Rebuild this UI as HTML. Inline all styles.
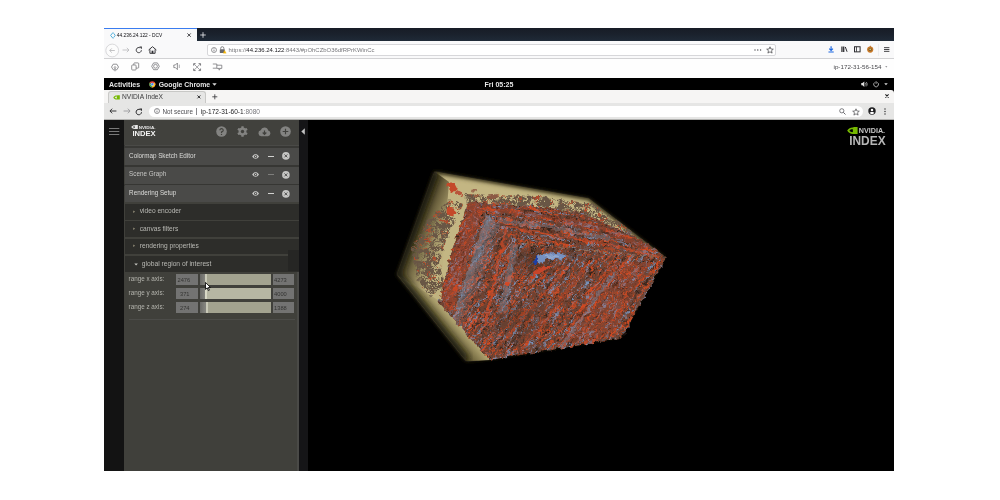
<!DOCTYPE html>
<html>
<head>
<meta charset="utf-8">
<style>
html,body{margin:0;padding:0;background:#fff;}
body{width:1000px;height:500px;position:relative;overflow:hidden;font-family:"Liberation Sans",sans-serif;}
.a{position:absolute;}
.t{position:absolute;white-space:nowrap;line-height:10px;height:10px;}
svg{position:absolute;overflow:visible;}
#win{left:104px;top:28px;width:789.8px;height:443.3px;background:#000;overflow:hidden;will-change:transform;}
/* Firefox tab bar */
#fftabs{left:0;top:0;width:790px;height:13px;background:linear-gradient(#171c26,#1a212c 45%,#1f2a37);}
#fftab{left:0;top:0;width:93px;height:13px;background:#f9f9fa;border-top:1px solid #3a7cf0;box-sizing:border-box;}
/* firefox nav */
#ffnav{left:0;top:13px;width:790px;height:17.6px;background:#f9f9fa;border-bottom:1px solid #d2d2d4;box-sizing:border-box;}
#ffurl{left:103px;top:2px;width:569px;height:12px;background:#fff;border:1px solid #d7d7da;border-radius:2px;box-sizing:border-box;}
/* dcv toolbar */
#dcv{left:0;top:30.6px;width:790px;height:19.4px;background:#fefefe;}
/* gnome bar */
#gnome{left:0;top:50px;width:790px;height:12px;background:#000;color:#e6e6e6;font-weight:bold;font-size:7px;}
/* chrome tabs */
#chtabs{left:0;top:62px;width:790px;height:13px;background:#f6f5f4;border-radius:0 3px 0 0;}
#chtab{left:3.6px;top:0.5px;width:98.2px;height:12.5px;background:#e6e6e5;border-radius:3px 3px 0 0;border:1px solid #c8c8c6;border-bottom:none;box-sizing:border-box;}
#chnav{left:0;top:75px;width:790px;height:17px;background:#e6e6e5;border-bottom:1px solid #b4b4b2;box-sizing:border-box;}
#churl{left:45px;top:2px;width:714px;height:11.4px;background:#fff;border-radius:6px;}
/* app */
#app{left:0;top:92px;width:790px;height:351px;background:#000;}
#strip{left:0;top:0;width:20px;height:351px;background:#131313;}
#panel{left:20px;top:0;width:175px;height:351px;background:#40403b;overflow:hidden;}
#split{left:195px;top:0;width:9.2px;height:351px;background:#151517;}
</style>
</head>
<body>
<div id="win" class="a">
  <!-- Firefox tab bar -->
  <div id="fftabs" class="a">
    <div id="fftab" class="a"></div>
    <svg style="left:6px;top:4px" width="6" height="7" viewBox="0 0 6 7"><path d="M3.2 0.3 L0.6 3.4 L3.2 6.6 M3.6 1.2 L5.2 3.4 L3.6 5.6" fill="none" stroke="#3fa7d8" stroke-width="0.9"/></svg>
    <div class="t" style="left:12.8px;top:2.7px;font-size:4.85px;color:#0c0c10;">44.236.24.122 - DCV</div>
    <svg style="left:82.6px;top:5px" width="4.2" height="4.2" viewBox="0 0 5 5"><path d="M0.5 0.5L4.5 4.5M4.5 0.5L0.5 4.5" stroke="#2a2a2e" stroke-width="1"/></svg>
    <svg style="left:96px;top:3.6px" width="6" height="6" viewBox="0 0 6 6"><path d="M3 0.2V5.8M0.2 3H5.8" stroke="#f0f0f2" stroke-width="0.8"/></svg>
  </div>
  <!-- Firefox nav bar -->
  <div id="ffnav" class="a"><div class="a" style="left:0;top:0.7px;width:790px;height:16px;">
    <svg style="left:1px;top:1px" width="15" height="15" viewBox="0 0 15 15"><circle cx="7.2" cy="7.5" r="6.4" fill="#fcfcfc" stroke="#c9c9cb" stroke-width="0.7"/><path d="M9.8 7.5H4.8M6.8 5.4L4.7 7.5L6.8 9.6" fill="none" stroke="#b4b4b6" stroke-width="0.8"/></svg>
    <svg style="left:18px;top:5px" width="8" height="6" viewBox="0 0 8 6"><path d="M0.5 3H7M4.8 0.8L7 3L4.8 5.2" fill="none" stroke="#b8b8ba" stroke-width="0.8"/></svg>
    <svg style="left:31px;top:4px" width="8" height="8" viewBox="0 0 8 8"><path d="M6.4 4.2A2.6 2.6 0 1 1 5.2 1.9" fill="none" stroke="#3a3a3e" stroke-width="0.95"/><path d="M4.3 0.6H6.9V3.2Z" fill="#3a3a3e"/></svg>
    <svg style="left:44px;top:4px" width="9" height="8" viewBox="0 0 9 8"><path d="M0.6 4L4.5 0.7L8.4 4M1.9 3.4V7.3H7.1V3.4" fill="none" stroke="#2e2e32" stroke-width="0.95"/><rect x="3.6" y="4.7" width="1.8" height="2.6" fill="#2e2e32"/></svg>
    <div id="ffurl" class="a"></div>
    <svg style="left:107px;top:5px" width="6" height="6" viewBox="0 0 6 6"><circle cx="3" cy="3" r="2.5" fill="none" stroke="#55555a" stroke-width="0.6"/><path d="M3 2.6V4.4M3 1.4V2" stroke="#55555a" stroke-width="0.7"/></svg>
    <svg style="left:115px;top:4px" width="7" height="8" viewBox="0 0 7 8"><path d="M1.7 3.4V2.3A1.6 1.6 0 0 1 4.9 2.3V3.4" fill="none" stroke="#68686c" stroke-width="0.8"/><rect x="0.8" y="3.3" width="5" height="3.8" rx="0.5" fill="#68686c"/><path d="M4.2 7.2L5.7 4.4L7.2 7.2Z" fill="#f5b400" stroke="#f5b400" stroke-width="0.3"/></svg>
    <div class="t" style="left:124.5px;top:3.5px;font-size:5.94px;color:#77777b;">https://<span style="color:#18171c">44.236.24.122</span>:8443/#pOhCZbO36dfRPrKWinCc</div>
    <!-- url right -->
    <svg style="left:650px;top:7px" width="8" height="2" viewBox="0 0 8 2"><circle cx="1" cy="1" r="0.7" fill="#4a4a4f"/><circle cx="3.8" cy="1" r="0.7" fill="#4a4a4f"/><circle cx="6.6" cy="1" r="0.7" fill="#4a4a4f"/></svg>
    <svg style="left:662px;top:4px" width="8" height="8" viewBox="0 0 8 8"><path d="M4 0.8L4.9 3L7.3 3.2L5.5 4.7L6.1 7.1L4 5.8L1.9 7.1L2.5 4.7L0.7 3.2L3.1 3Z" fill="none" stroke="#3e3e42" stroke-width="0.7" stroke-linejoin="round"/></svg>
    <!-- right toolbar icons -->
    <svg style="left:723.8px;top:4.3px" width="6.2" height="7" viewBox="0 0 8 9"><path d="M4 0.3V5.6M1.6 3.4L4 5.8L6.4 3.4M0.6 7.7H7.4" fill="none" stroke="#1a66e0" stroke-width="1.45"/></svg>
    <svg style="left:736.8px;top:4.7px" width="7.2" height="6.4" viewBox="0 0 9 8"><path d="M1.2 0.6V7.4M3.4 0.6V7.4" stroke="#2c2c30" stroke-width="1.6"/><path d="M5.4 1.2L7.6 7.2" stroke="#2c2c30" stroke-width="1.25"/></svg>
    <svg style="left:749.8px;top:4.6px" width="6.6" height="6.6" viewBox="0 0 8 8"><rect x="0.6" y="0.9" width="6.8" height="6.2" fill="none" stroke="#2c2c30" stroke-width="1.2"/><path d="M3 1V7" stroke="#2c2c30" stroke-width="1"/></svg>
    <svg style="left:762px;top:3.8px" width="8.4" height="8.4" viewBox="0 0 10 10"><circle cx="5" cy="5.4" r="3.7" fill="#c97a28"/><circle cx="5" cy="5.4" r="2" fill="#7a5a2a"/><circle cx="5" cy="5.2" r="1" fill="#e8c26a"/><path d="M4 2L5.2 0.5L6.2 2Z" fill="#b5601c"/></svg>
    <div class="a" style="left:773.5px;top:2px;width:1px;height:12px;background:#ececee"></div>
    <svg style="left:779.8px;top:5.4px" width="5.4" height="5" viewBox="0 0 7 6"><path d="M0 0.6H7M0 3H7M0 5.4H7" stroke="#2a2a2e" stroke-width="1.15"/></svg>
  </div></div>
  <!-- DCV toolbar -->
  <div id="dcv" class="a"><div class="a" style="left:0;top:-0.6px;width:790px;height:20px;">
    <svg style="left:7px;top:4.5px" width="8" height="9" viewBox="0 0 8 9"><path d="M2.2 1.2H5.8L7.5 4L5.8 6.8H2.2L0.5 4Z" fill="none" stroke="#707074" stroke-width="0.75" stroke-linejoin="round"/><path d="M4 3V5.5M2.9 4.5L4 5.7L5.1 4.5" fill="none" stroke="#707074" stroke-width="0.7"/><path d="M4 6.8V8.3" stroke="#707074" stroke-width="0.7"/></svg>
    <svg style="left:27px;top:4.4px" width="9" height="9" viewBox="0 0 9 9"><rect x="2.8" y="0.9" width="4.9" height="5.2" rx="0.8" fill="none" stroke="#707074" stroke-width="0.75"/><rect x="0.7" y="3" width="4.4" height="5" rx="0.8" fill="#fdfdfd" stroke="#707074" stroke-width="0.75"/></svg>
    <svg style="left:47.4px;top:4.4px" width="9" height="9" viewBox="0 0 9 9"><path d="M2.6 0.9H6.4L8.3 4.3L6.4 7.7H2.6L0.7 4.3Z" fill="none" stroke="#707074" stroke-width="0.75" stroke-linejoin="round"/><circle cx="4.5" cy="4.3" r="1.9" fill="none" stroke="#707074" stroke-width="0.7"/></svg>
    <svg style="left:68.6px;top:4.4px" width="9" height="9" viewBox="0 0 9 9"><path d="M0.8 3H2.4L4.4 1V7.6L2.4 5.6H0.8Z" fill="none" stroke="#707074" stroke-width="0.75" stroke-linejoin="round"/><path d="M6.3 2.6V6" stroke="#8a8a8e" stroke-width="0.7"/></svg>
    <svg style="left:89px;top:4.6px" width="8.2" height="8.2" viewBox="0 0 9 9"><path d="M1.2 1.2L7.8 7.8M7.8 1.2L1.2 7.8" stroke="#707074" stroke-width="0.7"/><path d="M0.7 2.9V0.7H2.9M6.1 0.7H8.3V2.9M8.3 6.1V8.3H6.1M2.9 8.3H0.7V6.1" fill="none" stroke="#505054" stroke-width="0.8"/></svg>
    <svg style="left:108px;top:4.6px" width="11" height="9" viewBox="0 0 11 9"><path d="M0.8 1H4.8V5.2H0.8M4.8 2.2H9.8V5.4H4.8" fill="none" stroke="#707074" stroke-width="0.75"/><path d="M6.5 5.6L7.3 7.2L8.1 5.6" fill="none" stroke="#707074" stroke-width="0.7"/></svg>
    <div class="t" style="left:729.5px;top:3.6px;font-size:6.26px;color:#4a4a4e;">ip-172-31-56-154</div>
    <svg style="left:781px;top:8.4px" width="2.6" height="2" viewBox="0 0 4 3"><path d="M0.3 0.4L2 2.4L3.7 0.4Z" fill="#77777b"/></svg>
  </div></div>
  <!-- GNOME bar -->
  <div id="gnome" class="a">
    <div class="t" style="left:5px;top:1.5px;">Activities</div>
    <svg style="left:45.2px;top:2.9px" width="6.6" height="6.6" viewBox="0 0 7 7"><circle cx="3.5" cy="3.5" r="3.3" fill="#e2453a"/><path d="M3.5 3.5L0.6 1.9A3.3 3.3 0 0 0 3.2 6.8Z" fill="#3aa757"/><path d="M3.5 3.5L3.2 6.8A3.3 3.3 0 0 0 6.4 1.9Z" fill="#f6c026"/><circle cx="3.5" cy="3.5" r="1.6" fill="#fff"/><circle cx="3.5" cy="3.5" r="1.25" fill="#4a8af4"/></svg>
    <div class="t" style="left:54.8px;top:1.5px;font-size:6.85px;">Google Chrome</div>
    <svg style="left:108px;top:5px" width="5" height="3" viewBox="0 0 5 3"><path d="M0.3 0.3L2.5 2.7L4.7 0.3Z" fill="#d8d8d8"/></svg>
    <div class="t" style="left:380.5px;top:1.5px;">Fri 05:25</div>
    <svg style="left:757.2px;top:3.2px" width="7.2" height="6.4" viewBox="0 0 8 7"><path d="M0.3 2.3H1.6L3.7 0.4V6.6L1.6 4.7H0.3Z" fill="#e0e0e0"/><path d="M4.8 2A2 2 0 0 1 4.8 5M5.7 1A3.3 3.3 0 0 1 5.7 6" fill="none" stroke="#e0e0e0" stroke-width="0.7"/></svg>
    <svg style="left:769px;top:3.2px" width="6.2" height="6.2" viewBox="0 0 7 7"><path d="M2.2 1.5A2.7 2.7 0 1 0 4.8 1.5" fill="none" stroke="#e0e0e0" stroke-width="0.8"/><path d="M3.5 0.2V3.2" stroke="#e0e0e0" stroke-width="0.8"/></svg>
    <svg style="left:780px;top:5.2px" width="4" height="2.5" viewBox="0 0 5 3"><path d="M0.3 0.3L2.5 2.7L4.7 0.3Z" fill="#d8d8d8"/></svg>
  </div>
  <!-- Chrome tabs -->
  <div id="chtabs" class="a">
    <div id="chtab" class="a"></div>
    <svg style="left:8.5px;top:5px" width="7" height="5" viewBox="0 0 7 5"><path d="M0.3 2.4C1.5 0.6 3.2 0.3 4.2 0.7V0.2H6.8V4.6H3.6C2.2 4.6 1 3.7 0.3 2.4Z" fill="#76b900"/><path d="M1.7 2.4C2.3 1.6 3.2 1.4 3.9 1.6V3.4C3 3.5 2.2 3.1 1.7 2.4Z" fill="#e6e6e5"/></svg>
    <div class="t" style="left:18px;top:2.2px;font-size:6.65px;color:#3a3a3c;">NVIDIA IndeX</div>
    <svg style="left:93.4px;top:5px" width="3.8" height="3.8" viewBox="0 0 5 5"><path d="M0.6 0.6L4.4 4.4M4.4 0.6L0.6 4.4" stroke="#2e2e30" stroke-width="1.3"/></svg>
    <svg style="left:108.4px;top:3.8px" width="5.6" height="5.6" viewBox="0 0 6 6"><path d="M3 0.3V5.7M0.3 3H5.7" stroke="#3a3a3c" stroke-width="0.9"/></svg>
    <svg style="left:781px;top:4.4px" width="4" height="4" viewBox="0 0 4 4"><path d="M0.4 0.4L3.6 3.6M3.6 0.4L0.4 3.6" stroke="#1c1c1e" stroke-width="1.05"/></svg>
  </div>
  <!-- Chrome nav -->
  <div id="chnav" class="a"><div class="a" style="left:0;top:0.8px;width:790px;height:16px;">
    <svg style="left:4.8px;top:4.5px" width="8" height="6" viewBox="0 0 8 6"><path d="M7.4 3H1M3.2 0.7L0.9 3L3.2 5.3" fill="none" stroke="#2e2e30" stroke-width="0.95"/></svg>
    <svg style="left:18.5px;top:4.5px" width="8" height="6" viewBox="0 0 8 6"><path d="M0.6 3H7M4.8 0.7L7.1 3L4.8 5.3" fill="none" stroke="#9a9a9c" stroke-width="0.9"/></svg>
    <svg style="left:31px;top:4px" width="8" height="8" viewBox="0 0 8 8"><path d="M6.5 4.2A2.7 2.7 0 1 1 5.3 1.8" fill="none" stroke="#2e2e30" stroke-width="1"/><path d="M4.2 0.4H7V3.2Z" fill="#2e2e30"/></svg>
    <div id="churl" class="a"></div>
    <svg style="left:49.5px;top:4.5px" width="6" height="6" viewBox="0 0 6 6"><circle cx="3" cy="3" r="2.5" fill="none" stroke="#55555a" stroke-width="0.65"/><path d="M3 2.6V4.4M3 1.4V2" stroke="#55555a" stroke-width="0.7"/></svg>
    <div class="t" style="left:58.5px;top:3.1px;font-size:6.3px;color:#4c4c50;">Not secure</div>
    <div class="a" style="left:92px;top:4px;width:0.7px;height:7px;background:#88888c"></div>
    <div class="t" style="left:96.8px;top:3.1px;font-size:6.54px;color:#1c1c1e;">ip-172-31-60-1<span style="color:#77777b">:8080</span></div>
    <svg style="left:734.5px;top:4.5px" width="7" height="7" viewBox="0 0 7 7"><circle cx="2.8" cy="2.8" r="2.1" fill="none" stroke="#55555a" stroke-width="0.75"/><path d="M4.4 4.4L6.5 6.5" stroke="#55555a" stroke-width="0.9"/></svg>
    <svg style="left:747.5px;top:4px" width="8" height="8" viewBox="0 0 8 8"><path d="M4 0.8L4.9 3L7.3 3.2L5.5 4.7L6.1 7.1L4 5.8L1.9 7.1L2.5 4.7L0.7 3.2L3.1 3Z" fill="none" stroke="#4a4a4e" stroke-width="0.7" stroke-linejoin="round"/></svg>
    <svg style="left:764px;top:3.5px" width="8" height="8" viewBox="0 0 8 8"><circle cx="4" cy="4" r="3.7" fill="#1e1e20"/><circle cx="4" cy="3" r="1.25" fill="#fff"/><path d="M1.6 6.1C2.3 4.7 5.7 4.7 6.4 6.1A3.2 3.2 0 0 1 1.6 6.1Z" fill="#fff"/></svg>
    <svg style="left:780.2px;top:4.5px" width="2" height="7" viewBox="0 0 2 7"><circle cx="1" cy="0.9" r="0.75" fill="#3a3a3c"/><circle cx="1" cy="3.5" r="0.75" fill="#3a3a3c"/><circle cx="1" cy="6.1" r="0.75" fill="#3a3a3c"/></svg>
  </div></div>
  <div class="a" style="left:0;top:442.6px;width:790px;height:0.8px;background:#1b2230;z-index:5"></div>
  <!-- App -->
  <div id="app" class="a">
    <div id="strip" class="a">
      <svg style="left:5px;top:8px" width="11" height="7" viewBox="0 0 11 7"><path d="M0 0.5H10.3M0 3.5H10.3M0 6.5H10.3" stroke="#949494" stroke-width="0.8"/></svg>
    </div>
    <div id="panel" class="a">
      <style>
        #panel .hdr{left:0;top:0;width:175px;height:25px;background:#41413d;}
        #panel .row{left:0.8px;width:174.2px;height:17px;background:#4a4a48;color:#dcdcda;font-size:6.3px;}
        #panel .row .t{left:4.3px;top:3.2px;}
        #panel .sub{left:1px;width:174px;height:15.5px;background:#2d2d2a;color:#b9b9b4;font-size:6.6px;}
        #panel .sub .t{left:14.8px;top:1.9px;}
        #panel .lbl{left:4.6px;font-size:6.3px;color:#b4b4ae;}
        #panel .box{width:22px;height:11px;background:#737372;color:#343432;font-size:5.7px;}
        #panel .box .t{left:1.5px;top:0.8px;}
        #panel .trk{left:76px;width:71px;height:11px;background:linear-gradient(90deg,#6a6a67,#83837e 5px,#83837e);}
      </style>
      <div class="a hdr"></div>
      <!-- small nvidia logo -->
      <svg style="left:6.8px;top:5px" width="25" height="4.2" viewBox="0 0 25 4.2"><path d="M0.2 2.1C1.4 0.5 3 0.1 4.2 0.5V0.1H6.8V4.1H3.6C2.2 4.1 1 3.3 0.2 2.1Z" fill="#e8e8e8"/><path d="M1.6 2.1C2.2 1.4 3.1 1.2 3.8 1.4V2.9C2.9 3 2.1 2.7 1.6 2.1Z" fill="#41413d"/><text x="7.7" y="3.75" font-family="Liberation Sans" font-weight="bold" font-size="4.4" fill="#e8e8e8" textLength="16.8" lengthAdjust="spacingAndGlyphs">NVIDIA.</text></svg>
      <div class="t" style="left:8.6px;top:9.4px;font-size:7.6px;font-weight:bold;color:#f4f4f4;letter-spacing:-0.08px;">INDEX</div>
      <!-- header icons -->
      <svg style="left:92.2px;top:6.2px" width="11" height="11" viewBox="0 0 11 11"><circle cx="5.5" cy="5.5" r="5.3" fill="#838381"/><path d="M3.9 4.3A1.65 1.65 0 1 1 5.5 5.9V6.9" fill="none" stroke="#41413d" stroke-width="1.15"/><circle cx="5.5" cy="8.4" r="0.7" fill="#41413d"/></svg>
      <svg style="left:113px;top:6.2px" width="11" height="11" viewBox="0 0 11 11"><g fill="#838381"><circle cx="5.5" cy="5.5" r="3.9"/><g id="tth"><rect x="4.3" y="0.2" width="2.4" height="10.6" rx="0.4"/></g><use href="#tth" transform="rotate(60 5.5 5.5)"/><use href="#tth" transform="rotate(120 5.5 5.5)"/></g><circle cx="5.5" cy="5.5" r="1.7" fill="#41413d"/></svg>
      <svg style="left:134px;top:7px" width="13" height="9.5" viewBox="0 0 13 9.5"><path d="M3.2 9.2A3 3 0 0 1 2.7 3.3A3.9 3.9 0 0 1 10.2 3.6A2.85 2.85 0 0 1 10 9.2Z" fill="#838381"/><path d="M6.5 3.4V6.8M4.7 5.5L6.5 7.4L8.3 5.5" fill="none" stroke="#41413d" stroke-width="1.2"/></svg>
      <svg style="left:155.8px;top:6.2px" width="11" height="11" viewBox="0 0 11 11"><circle cx="5.5" cy="5.5" r="5.3" fill="#838381"/><path d="M5.5 2.7V8.3M2.7 5.5H8.3" stroke="#41413d" stroke-width="1.15"/></svg>
      <div class="a" style="left:0;top:24.8px;width:175px;height:2.9px;background:#383835;"></div><div class="a" style="left:0.8px;top:25.3px;width:174.2px;height:1px;background:#4a4a47;"></div>
      <!-- rows -->
      <div class="a row" style="top:27.6px;"><div class="t">Colormap Sketch Editor</div></div>
      <div class="a" style="left:0;top:44.6px;width:175px;height:2px;background:#363633;"></div>
      <div class="a row" style="top:46.5px;color:#c6c6c4;"><div class="t" style="top:2.7px">Scene Graph</div></div>
      <div class="a" style="left:0;top:63.5px;width:175px;height:2px;background:#363633;"></div>
      <div class="a row" style="top:65.3px;"><div class="t" style="top:2.4px">Rendering Setup</div></div>
      <svg style="left:127.8px;top:33.6px" width="7.2" height="5" viewBox="0 0 7.2 5"><path d="M0.2 2.5C1.2 0.8 2.4 0.3 3.6 0.3C4.8 0.3 6 0.8 7 2.5C6 4.2 4.8 4.7 3.6 4.7C2.4 4.7 1.2 4.2 0.2 2.5Z" fill="#cbcbc9"/><circle cx="3.6" cy="2.5" r="1.6" fill="#4b4b49"/><circle cx="3.6" cy="2.5" r="0.75" fill="#cbcbc9"/></svg>
      <div class="a" style="left:143.8px;top:35.7px;width:5.8px;height:0.85px;background:#d2d2d0;"></div>
      <svg style="left:158px;top:32.2px" width="7.8" height="7.8" viewBox="0 0 8 8"><circle cx="4" cy="4" r="3.9" fill="#c6c6c4"/><path d="M2.5 2.5L5.5 5.5M5.5 2.5L2.5 5.5" stroke="#4b4b49" stroke-width="0.95"/></svg>
      <svg style="left:127.8px;top:52.0px" width="7.2" height="5" viewBox="0 0 7.2 5"><path d="M0.2 2.5C1.2 0.8 2.4 0.3 3.6 0.3C4.8 0.3 6 0.8 7 2.5C6 4.2 4.8 4.7 3.6 4.7C2.4 4.7 1.2 4.2 0.2 2.5Z" fill="#cbcbc9"/><circle cx="3.6" cy="2.5" r="1.6" fill="#4b4b49"/><circle cx="3.6" cy="2.5" r="0.75" fill="#cbcbc9"/></svg>
      <div class="a" style="left:143.8px;top:54.1px;width:5.8px;height:0.85px;background:#7e7e7c;"></div>
      <svg style="left:158px;top:50.6px" width="7.8" height="7.8" viewBox="0 0 8 8"><circle cx="4" cy="4" r="3.9" fill="#c6c6c4"/><path d="M2.5 2.5L5.5 5.5M5.5 2.5L2.5 5.5" stroke="#4b4b49" stroke-width="0.95"/></svg>
      <svg style="left:127.8px;top:70.9px" width="7.2" height="5" viewBox="0 0 7.2 5"><path d="M0.2 2.5C1.2 0.8 2.4 0.3 3.6 0.3C4.8 0.3 6 0.8 7 2.5C6 4.2 4.8 4.7 3.6 4.7C2.4 4.7 1.2 4.2 0.2 2.5Z" fill="#cbcbc9"/><circle cx="3.6" cy="2.5" r="1.6" fill="#4b4b49"/><circle cx="3.6" cy="2.5" r="0.75" fill="#cbcbc9"/></svg>
      <div class="a" style="left:143.8px;top:73.0px;width:5.8px;height:0.85px;background:#d2d2d0;"></div>
      <svg style="left:158px;top:69.5px" width="7.8" height="7.8" viewBox="0 0 8 8"><circle cx="4" cy="4" r="3.9" fill="#c6c6c4"/><path d="M2.5 2.5L5.5 5.5M5.5 2.5L2.5 5.5" stroke="#4b4b49" stroke-width="0.95"/></svg>
      <!-- sub rows -->
      <div class="a sub" style="top:84.2px;"><svg style="left:8.4px;top:5.4px" width="2.4" height="3.4" viewBox="0 0 3 4"><path d="M0.4 0.4L2.5 2L0.4 3.6Z" fill="#a09a84"/></svg><div class="t">video encoder</div></div>
      <div class="a sub" style="top:101.2px;"><svg style="left:8.4px;top:5.4px" width="2.4" height="3.4" viewBox="0 0 3 4"><path d="M0.4 0.4L2.5 2L0.4 3.6Z" fill="#a09a84"/></svg><div class="t" style="top:2.6px">canvas filters</div></div>
      <div class="a sub" style="top:118.7px;"><svg style="left:8.4px;top:5.4px" width="2.4" height="3.4" viewBox="0 0 3 4"><path d="M0.4 0.4L2.5 2L0.4 3.6Z" fill="#a09a84"/></svg><div class="t">rendering properties</div></div>
      <div class="a sub" style="top:136px;"><svg style="left:8.8px;top:7.1px" width="4.2" height="2.9" viewBox="0 0 4.4 3"><path d="M0.3 0.4L2.2 2.6L4.1 0.4Z" fill="#c4c4be"/></svg><div class="t" style="left:16.8px;top:3.1px;font-size:6.7px;">global region of interest</div></div>
      <!-- scrollbar thumb -->
      <div class="a" style="left:163.6px;top:130px;width:11.4px;height:21.4px;background:#262624;"></div>
      <!-- range rows -->
      <div class="t lbl" style="top:153.8px;">range x axis:</div>
      <div class="a box" style="left:52px;top:154.3px;"><div class="t">2476</div></div>
      <div class="a trk" style="top:154.3px;"><div class="a" style="left:5.6px;top:0;width:65.4px;height:11px;background:#a3a390;"></div><div class="a" style="left:4.8px;top:0;width:1.8px;height:11px;background:#c9c9b8;"></div></div>
      <div class="a box" style="left:148.6px;top:154.3px;width:21.4px"><div class="t">4273</div></div>
      <div class="t lbl" style="top:167.9px;">range y axis:</div>
      <div class="a box" style="left:52px;top:168.4px;"><div class="t" style="left:4px">371</div></div>
      <div class="a trk" style="top:168.4px;"><div class="a" style="left:5.6px;top:0;width:65.4px;height:11px;background:#b6b6a3;"></div><div class="a" style="left:4.8px;top:0;width:1.8px;height:11px;background:#d8d8c6;"></div></div>
      <div class="a box" style="left:148.6px;top:168.4px;width:21.4px"><div class="t">4000</div></div>
      <div class="t lbl" style="top:182.4px;">range z axis:</div>
      <div class="a box" style="left:52px;top:182.2px;"><div class="t" style="left:4px">274</div></div>
      <div class="a trk" style="top:182.2px;"><div class="a" style="left:7px;top:0;width:64px;height:11px;background:#a3a390;"></div><div class="a" style="left:6.2px;top:0;width:1.8px;height:11px;background:#c9c9b8;"></div></div>
      <div class="a box" style="left:148.6px;top:182.2px;width:21.4px"><div class="t">1388</div></div>
      <div class="a" style="left:4.6px;top:198.7px;width:166.5px;height:0.9px;background:#4c4c49;"></div>
      <div class="a" style="left:173.2px;top:151.6px;width:1.8px;height:200px;background:#4a4a47;"></div>
    </div>
    <div id="split" class="a">
      <svg style="left:2.4px;top:8.2px" width="4" height="7" viewBox="0 0 4 7"><path d="M3.8 0.2V6.8L0.3 3.5Z" fill="#c4c4c4"/></svg>
    </div>
    <!-- mouse cursor -->
    <svg style="left:101.4px;top:161.6px" width="6" height="9.6" viewBox="0 0 5 8"><path d="M0.4 0.3V6.2L1.8 4.9L2.8 7.2L3.7 6.8L2.7 4.6H4.6Z" fill="#fff" stroke="#0a0a0a" stroke-width="0.75"/></svg>
    <!-- viewport scene (abs coords via viewBox) -->
    <svg style="left:0;top:0;overflow:hidden" width="790" height="351" viewBox="104 120 790 351">
      <defs>
        <filter id="soft" x="-10%" y="-10%" width="120%" height="120%"><feGaussianBlur stdDeviation="2.2"/></filter>
        <filter id="soft1" x="-10%" y="-10%" width="120%" height="120%"><feGaussianBlur stdDeviation="1"/></filter>
        <filter id="soft2" x="-10%" y="-10%" width="120%" height="120%"><feGaussianBlur stdDeviation="3.5"/></filter>
        <filter id="rough" x="-5%" y="-5%" width="110%" height="110%">
          <feTurbulence type="fractalNoise" baseFrequency="0.2" numOctaves="2" seed="11" result="d"/>
          <feDisplacementMap in="SourceGraphic" in2="d" scale="6" xChannelSelector="R" yChannelSelector="G"/>
        </filter>
        <filter id="tex" x="0" y="0" width="100%" height="100%" color-interpolation-filters="sRGB">
          <feTurbulence type="fractalNoise" baseFrequency="0.05 0.6" numOctaves="3" seed="7" result="n1"/>
          <feTurbulence type="fractalNoise" baseFrequency="0.8" numOctaves="2" seed="3" result="n2"/>
          <feComposite in="n1" in2="n2" operator="arithmetic" k1="0" k2="0.55" k3="0.45" k4="0" result="n"/>
          <feColorMatrix in="n" type="matrix" values="0 0 0 0 0.83  0 0 0 0 0.29  0 0 0 0 0.13  12 0 0 0 -6.4" result="red"/>
          <feColorMatrix in="n" type="matrix" values="0 0 0 0 0.47  0 0 0 0 0.57  0 0 0 0 0.72  0 12 0 0 -6.6" result="blue"/>
          <feColorMatrix in="n" type="matrix" values="0 0 0 0 0.17  0 0 0 0 0.12  0 0 0 0 0.09  0 0 10 0 -5.45" result="dark"/>
          <feFlood flood-color="#6c4232" result="base"/>
          <feMerge result="m"><feMergeNode in="base"/><feMergeNode in="dark"/><feMergeNode in="blue"/><feMergeNode in="red"/></feMerge>
          <feGaussianBlur in="m" stdDeviation="0.38" result="mb"/>
          <feComposite in="mb" in2="SourceGraphic" operator="in"/>
        </filter>
        <filter id="speck" x="0" y="0" width="100%" height="100%" color-interpolation-filters="sRGB">
          <feTurbulence type="fractalNoise" baseFrequency="0.12 0.16" numOctaves="2" seed="23" result="n1"/>
          <feTurbulence type="fractalNoise" baseFrequency="0.7" numOctaves="2" seed="5" result="n2"/>
          <feComposite in="n1" in2="n2" operator="arithmetic" k1="0" k2="0.55" k3="0.45" k4="0" result="n"/>
          <feColorMatrix in="n" type="matrix" values="0 0 0 0 0.68  0 0 0 0 0.30  0 0 0 0 0.18  12 0 0 0 -7.0" result="red"/>
          <feColorMatrix in="n" type="matrix" values="0 0 0 0 0.41  0 0 0 0 0.34  0 0 0 0 0.27  0 10 0 0 -4.3" result="gr"/>
          <feMerge result="m"><feMergeNode in="gr"/><feMergeNode in="red"/></feMerge>
          <feGaussianBlur in="m" stdDeviation="0.4" result="mb"/>
          <feComposite in="mb" in2="SourceGraphic" operator="in"/>
        </filter>
        <linearGradient id="gL" gradientUnits="userSpaceOnUse" x1="399" y1="262" x2="434" y2="276"><stop offset="0" stop-color="#332c16"/><stop offset="0.3" stop-color="#665c3a"/><stop offset="0.6" stop-color="#968a5e"/><stop offset="1" stop-color="#c0b380"/></linearGradient>
        <linearGradient id="gB" gradientUnits="userSpaceOnUse" x1="434" y1="332" x2="456" y2="312"><stop offset="0" stop-color="#332c16"/><stop offset="0.35" stop-color="#72683f"/><stop offset="0.7" stop-color="#a89c6a"/><stop offset="1" stop-color="#c6ba88"/></linearGradient>
        <clipPath id="cTop"><path d="M468 202L536 206L584 212.5L613 227L633 234.5L651 246L666 257.5L600 252L521 243L480 226Z"/></clipPath>
        <clipPath id="cRest"><path d="M468 202L521 243L600 252L666 257.5L622 338.5L489.5 360L438.5 303L452 250Z"/></clipPath>
        <clipPath id="cHull"><path d="M434.5 171.5L589 198.5L666 257.5L622 338.5L489.5 360.5L466 361L397 274.5Z"/></clipPath>
        <clipPath id="cRock"><path d="M468 202L536 206L584 212.5L613 227L633 234.5L651 246L666 257.5L622 338.5L489.5 360L438.5 303L452 250Z"/></clipPath>
        <radialGradient id="gDark" cx="0.5" cy="0.5" r="0.5"><stop offset="0" stop-color="#4a3226" stop-opacity="0.75"/><stop offset="1" stop-color="#4a3226" stop-opacity="0"/></radialGradient>
        <linearGradient id="gBlueBand" gradientUnits="userSpaceOnUse" x1="452" y1="262" x2="486" y2="276"><stop offset="0" stop-color="#7f8fa6" stop-opacity="0"/><stop offset="0.5" stop-color="#7f8fa6" stop-opacity="0.55"/><stop offset="1" stop-color="#7f8fa6" stop-opacity="0"/></linearGradient>
      </defs>
      <!-- hull glow + body -->
      <path d="M434.5 171.5L589 198.5L664 256.5L620 336L489.5 358.5L466 361L397 274.5Z" fill="#38301a" filter="url(#soft)"/>
      <path d="M435.5 173L588 199.5L662 256.5L618 335L489.5 357.5L467 360L398.5 274.5Z" fill="#c3b683" filter="url(#soft1)"/>
      <g clip-path="url(#cHull)">
        <!-- left face gradient -->
        <path d="M434.5 171.5L449 182L440 300L420 300L397 274.5Z" fill="url(#gL)"/>
        <!-- bottom-left strip -->
        <path d="M397 274.5L438 300L491 360L466 362Z" fill="url(#gB)"/>
        <!-- edge shading -->
        <path d="M434.5 171.5L589 198.5L666 257.5" fill="none" stroke="#5c5232" stroke-width="4" filter="url(#soft)"/>
        <path d="M434.5 171.5L397 274.5L466 361" fill="none" stroke="#1e1a0a" stroke-width="9" filter="url(#soft2)"/>
        <!-- mottled zones on beige -->
        <g filter="url(#rough)">
          <path d="M450 199L463 205L447 238L440 262L444 288L430 297L416 277L412 248L428 220Z" fill="#000" filter="url(#speck)"/>
          <path d="M462 194L540 196L596 205L640 236L633 234.5L613 227L584 212.5L536 206L468 202Z" fill="#000" filter="url(#speck)"/>
          <ellipse cx="452.5" cy="187" rx="5.5" ry="4" fill="#c4492c" transform="rotate(35 452.5 187)"/>
          <ellipse cx="459" cy="193" rx="3" ry="2.2" fill="#b8553a"/>
          <ellipse cx="451" cy="211.5" rx="3.4" ry="4.4" fill="#c4492c"/>
          <ellipse cx="474" cy="190" rx="3" ry="1.6" fill="#9a6a50"/>
          <ellipse cx="492" cy="196" rx="5" ry="2" fill="#8c5a44"/>
        </g>
      </g>
      <!-- rock -->
      <g filter="url(#rough)">
        <g clip-path="url(#cTop)"><rect transform="rotate(11 560 225)" x="440" y="150" width="260" height="150" fill="#000" filter="url(#tex)"/></g>
        <g clip-path="url(#cRest)"><rect transform="rotate(-52 540 290)" x="380" y="130" width="320" height="320" fill="#000" filter="url(#tex)"/></g>
        <g clip-path="url(#cRock)">
          <!-- left-face layer bands -->
          <path d="M470 200L483 208L451 314L440 300Z" fill="#b8452a" opacity="0.38"/>
          <path d="M486 214L501 224L468 334L453 318Z" fill="url(#gBlueBand)"/>
          <path d="M506.5 227L484.5 326" stroke="#cf4a28" stroke-width="2.6" opacity="0.7" fill="none"/>
          <path d="M515 244L502 312" stroke="#7f92ad" stroke-width="7" opacity="0.38" fill="none"/>
          <!-- chevron continuation on top face -->
          <path d="M483 208L540 216L600 228L648 248" stroke="#b8452a" stroke-width="5" opacity="0.32" fill="none"/>
          <path d="M506.5 227L560 236L620 247L660 257" stroke="#cf4a28" stroke-width="2.2" opacity="0.55" fill="none"/>
          <path d="M498 220L550 227L610 239" stroke="#7f92ad" stroke-width="4" opacity="0.3" fill="none"/>
          <!-- darker brown patches -->
          <ellipse cx="532" cy="262" rx="26" ry="15" fill="url(#gDark)"/>
          <ellipse cx="520" cy="318" rx="34" ry="20" fill="url(#gDark)" opacity="0.55"/>
          <!-- red-rich right/front -->
          <path d="M610 262L650 262L612 336L560 345L585 300Z" fill="#c24828" opacity="0.22"/>
          <path d="M585 268L520 352" stroke="#cf4a28" stroke-width="3" opacity="0.4" fill="none"/>
          <path d="M615 272L560 348" stroke="#7f92ad" stroke-width="3" opacity="0.4" fill="none"/>
          <path d="M560 275L500 345" stroke="#cf4a28" stroke-width="2.4" opacity="0.35" fill="none"/>
        </g>
      </g>
      <!-- blue feature -->
      <g filter="url(#rough)">
      <path d="M535 259L541 254L557 253L569 256L560 259L547 259L539 264Z" fill="#7590c0"/>
      <path d="M543 256L556 255L562 257L548 258Z" fill="#93a8cc"/>
      <path d="M533 263L537 256L539.5 258L535.5 266Z" fill="#1f3fa8"/>
      <path d="M533 272L545 266L555 266L541 272L534 277Z" fill="#c8452a"/>
      <ellipse cx="507" cy="284" rx="2.2" ry="3" fill="#d24a28"/>
      </g>
      <!-- NVIDIA INDEX logo top right -->
      <g>
        <path d="M847.2 130.6C848.8 128 851.4 127.1 853.4 127.6V127H857.6V134H853C850.6 134 848.4 132.8 847.2 130.6Z" fill="#76b900"/>
        <path d="M849.4 130.6C850.3 129.4 851.8 129 852.9 129.3V132.1C851.5 132.3 850.2 131.7 849.4 130.6Z" fill="#000"/>
        <text x="858.8" y="133.2" font-family="Liberation Sans" font-weight="bold" font-size="6.6" fill="#c9c9c9" textLength="26.3" lengthAdjust="spacingAndGlyphs">NVIDIA.</text>
        <text x="849.2" y="144.9" font-family="Liberation Sans" font-weight="bold" font-size="12" fill="#b6b6b6" textLength="36.4" lengthAdjust="spacingAndGlyphs">INDEX</text>
      </g>
    </svg>
  </div>
</div>
</body>
</html>
